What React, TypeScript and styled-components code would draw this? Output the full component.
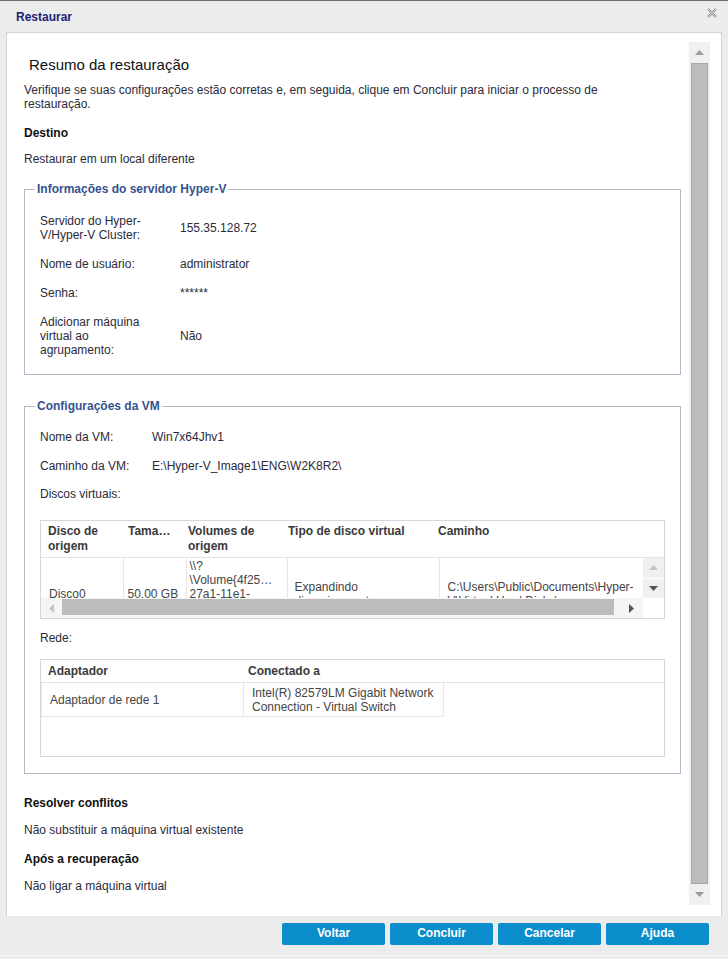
import React from 'react';
import styled, { createGlobalStyle } from 'styled-components';

const GlobalStyle = createGlobalStyle`
  html, body {
    margin: 0;
    padding: 0;
    background: #ececec;
  }
  body {
    font-family: "Liberation Sans", Arial, sans-serif;
    font-size: 12px;
    color: #2a2a3a;
  }
`;

const Dialog = styled.div`
  width: 728px;
  height: 959px;
  box-sizing: border-box;
  background: #ececec;
  border-top: 1px solid #6e6e6e;
  display: flex;
  flex-direction: column;
  overflow: hidden;
`;

const TitleBar = styled.div`
  flex: none;
  height: 31px;
  display: flex;
  align-items: center;
  padding: 0 10px 0 16px;
`;

const Title = styled.span`
  font-weight: bold;
  font-size: 12px;
  color: #1c2372;
`;

const CloseButton = styled.button`
  margin-left: auto;
  align-self: flex-start;
  margin-top: 6px;
  width: 12px;
  height: 12px;
  padding: 0;
  border: 0;
  background: none;
  display: flex;
`;

const Panel = styled.div`
  flex: 1;
  min-height: 0;
  margin: 0 6px;
  background: #fff;
  border: 1px solid #d2d2d2;
  border-bottom: 0;
  display: flex;
`;

const Content = styled.div`
  flex: 1;
  min-width: 0;
  padding: 23px 8px 0 17px;
  overflow: hidden;
`;

const ScrollTrack = styled.div`
  flex: none;
  width: 21px;
  margin: 9px 11px 11px 0;
  background: #f0f0f0;
  display: flex;
  flex-direction: column;
`;

const ArrowBox = styled.div`
  flex: none;
  height: 21px;
  display: flex;
  align-items: center;
  justify-content: center;
`;

const Thumb = styled.div`
  flex: 1;
  margin: 0 2px;
  background: #bcbcbc;
  border: 1px solid #a8a8a8;
`;

const Heading = styled.h1`
  margin: 0;
  padding-left: 5px;
  font-size: 15px;
  font-weight: normal;
  line-height: 18px;
  color: #111;
`;

const Text = styled.p<{ $top: number; $max?: number }>`
  margin: ${(p) => p.$top}px 0 0;
  max-width: ${(p) => (p.$max ? `${p.$max}px` : 'none')};
  line-height: 14px;
`;

const SectionTitle = styled.h3<{ $top: number }>`
  margin: ${(p) => p.$top}px 0 0;
  font-size: 12px;
  font-weight: bold;
  line-height: 14px;
  color: #111;
`;

const Group = styled.fieldset<{ $top: number; $bottom: number }>`
  margin: ${(p) => p.$top}px 0 0;
  padding: 0 15px ${(p) => p.$bottom}px;
  border: 1px solid #b6b6c6;
  min-width: 0;
`;

const GroupTitle = styled.legend`
  margin-left: -5px;
  padding: 0 2px;
  font-weight: bold;
  line-height: 14px;
  color: #35528e;
`;

const InfoGrid = styled.div<{ $label: number; $top: number }>`
  display: grid;
  grid-template-columns: ${(p) => p.$label}px 1fr;
  row-gap: 15px;
  align-items: center;
  margin-top: ${(p) => p.$top}px;
  line-height: 14px;
`;

const GridBox = styled.div<{ $top: number; $height: number }>`
  margin-top: ${(p) => p.$top}px;
  height: ${(p) => p.$height}px;
  box-sizing: border-box;
  border: 1px solid #d6d6dc;
  display: flex;
  flex-direction: column;
  color: #444;
`;

const HeaderRow = styled.div<{ $height: number; $padTop: number }>`
  flex: none;
  height: ${(p) => p.$height}px;
  box-sizing: border-box;
  padding-top: ${(p) => p.$padTop}px;
  border-bottom: 1px solid #e2e2e2;
  display: flex;
  align-items: flex-start;
  font-weight: bold;
  color: #3a3a3a;
  line-height: 15px;
`;

const HeaderCell = styled.div<{ $w?: number }>`
  flex: ${(p) => (p.$w ? `0 0 ${p.$w}px` : '1')};
  padding-left: 7px;
  box-sizing: border-box;
  white-space: nowrap;
`;

const BodyArea = styled.div`
  flex: 1;
  min-height: 0;
  display: flex;
`;

const Viewport = styled.div`
  flex: 1;
  min-width: 0;
  overflow: hidden;
`;

const DataTable = styled.table`
  border-collapse: collapse;
  table-layout: fixed;
  line-height: 14px;
`;

const Cell = styled.td<{ $w: number; $pad?: number }>`
  width: ${(p) => p.$w}px;
  min-width: ${(p) => p.$w}px;
  max-width: ${(p) => p.$w}px;
  padding: 1px ${(p) => p.$pad ?? 7}px;
  box-sizing: border-box;
  border-right: 1px solid #e6e6e6;
  vertical-align: middle;
  white-space: nowrap;
  overflow: hidden;
`;

const VScroll = styled.div`
  flex: none;
  width: 21px;
  display: flex;
  flex-direction: column;
  gap: 1px;
  background: #fff;
`;

const VScrollButton = styled.div`
  flex: 1;
  background: #f0f0f0;
  display: flex;
  align-items: center;
  justify-content: center;
`;

const HScroll = styled.div`
  flex: none;
  height: 20px;
  display: flex;
`;

const HTrack = styled.div`
  flex: 1;
  display: flex;
  background: #f5f5f5;
`;

const HLeft = styled.div`
  flex: 0 0 21px;
  display: flex;
  align-items: center;
  justify-content: center;
`;

const HThumb = styled.div`
  flex: 0 0 552px;
  height: 16px;
  margin-top: 1px;
  background: #bcbcbc;
`;

const HRight = styled.div`
  flex: 1;
  display: flex;
  align-items: center;
  justify-content: flex-end;
  padding-right: 9px;
`;

const Corner = styled.div`
  flex: 0 0 21px;
  background: #fff;
`;

const NetTable = styled.table`
  align-self: flex-start;
  border-collapse: collapse;
  table-layout: fixed;
  line-height: 14px;
`;

const NetCell = styled.td<{ $w: number }>`
  width: ${(p) => p.$w}px;
  box-sizing: border-box;
  padding: 3px 7px 2px 8px;
  border: 1px solid #e6e6e6;
  border-top: 0;
  vertical-align: middle;
  white-space: nowrap;
`;

const Footer = styled.div`
  flex: none;
  height: 40px;
  box-sizing: border-box;
  padding: 7px 19px 0 0;
  display: flex;
  justify-content: flex-end;
  align-items: flex-start;
  gap: 5px;
  border-bottom: 1px solid #f8f8f8;
  margin-bottom: 3px;
`;

const Button = styled.button`
  width: 103px;
  height: 22px;
  padding: 0 0 3px;
  border: 0;
  border-radius: 2px;
  background: #0b8dcb;
  color: #fff;
  font-family: "Liberation Sans", Arial, sans-serif;
  font-size: 12px;
  font-weight: bold;
  cursor: pointer;
`;

const Arrow = ({ dir, color }: { dir: 'up' | 'down' | 'left' | 'right'; color: string }) => {
  const points = {
    up: '0,5 4.5,0 9,5',
    down: '0,0 4.5,5 9,0',
    left: '5,0 0,4.5 5,9',
    right: '0,0 5,4.5 0,9',
  }[dir];
  const vertical = dir === 'up' || dir === 'down';
  return (
    <svg width={vertical ? 9 : 5} height={vertical ? 5 : 9} viewBox={vertical ? '0 0 9 5' : '0 0 5 9'}>
      <polygon points={points} fill={color} />
    </svg>
  );
};

const serverRows: [React.ReactNode, string][] = [
  [<>Servidor do Hyper-<br />V/Hyper-V Cluster:</>, '155.35.128.72'],
  ['Nome de usuário:', 'administrator'],
  ['Senha:', '******'],
  [<>Adicionar máquina<br />virtual ao<br />agrupamento:</>, 'Não'],
];

const diskColumns = [
  { title: <>Disco de<br />origem</>, w: 80 },
  { title: 'Tama…', w: 60 },
  { title: <>Volumes de<br />origem</>, w: 100 },
  { title: 'Tipo de disco virtual', w: 150 },
  { title: 'Caminho' },
];

const App = () => {
  return (
    <>
      <GlobalStyle />
      <Dialog>
        <TitleBar>
          <Title>Restaurar</Title>
          <CloseButton aria-label="Fechar">
            <svg width="12" height="12" viewBox="0 0 12 12">
              <path d="M2 2 L10 10 M10 2 L2 10" stroke="#8a8a8a" strokeWidth="2.2" />
              <path d="M2 2 L10 10 M10 2 L2 10" stroke="#ececec" strokeWidth="0.8" />
            </svg>
          </CloseButton>
        </TitleBar>

        <Panel>
          <Content>
            <Heading>Resumo da restauração</Heading>
            <Text $top={9} $max={600}>
              Verifique se suas configurações estão corretas e, em seguida, clique em Concluir para iniciar o processo de
              restauração.
            </Text>

            <SectionTitle $top={15}>Destino</SectionTitle>
            <Text $top={12}>Restaurar em um local diferente</Text>

            <Group $top={16} $bottom={17}>
              <GroupTitle>Informações do servidor Hyper-V</GroupTitle>
              <InfoGrid $label={140} $top={18}>
                {serverRows.map(([label, value], i) => (
                  <React.Fragment key={i}>
                    <span>{label}</span>
                    <span>{value}</span>
                  </React.Fragment>
                ))}
              </InfoGrid>
            </Group>

            <Group $top={24} $bottom={16}>
              <GroupTitle>Configurações da VM</GroupTitle>
              <InfoGrid $label={112} $top={17}>
                <span>Nome da VM:</span>
                <span>Win7x64Jhv1</span>
                <span>Caminho da VM:</span>
                <span>E:\Hyper-V_Image1\ENG\W2K8R2\</span>
              </InfoGrid>
              <Text $top={14}>Discos virtuais:</Text>

              <GridBox $top={19} $height={99}>
                <HeaderRow $height={37} $padTop={3}>
                  {diskColumns.map((c, i) => (
                    <HeaderCell key={i} $w={c.w}>
                      {c.title}
                    </HeaderCell>
                  ))}
                </HeaderRow>
                <BodyArea>
                  <Viewport>
                    <DataTable>
                      <tbody>
                        <tr>
                          <Cell $w={82} $pad={8}>Disco0</Cell>
                          <Cell $w={63} $pad={4}>50.00 GB</Cell>
                          <Cell $w={101} $pad={3}>
                            \\?<br />\Volume{'{'}4f25…<br />27a1-11e1-<br />a0c4-<br />806e6f6e6963{'}'}\
                          </Cell>
                          <Cell $w={152} $pad={7}>
                            Expandindo<br />dinamicamente
                          </Cell>
                          <Cell $w={230} $pad={8}>
                            C:\Users\Public\Documents\Hyper-<br />V\Virtual Hard Disks\
                          </Cell>
                        </tr>
                      </tbody>
                    </DataTable>
                  </Viewport>
                  <VScroll>
                    <VScrollButton>
                      <Arrow dir="up" color="#c4c4c4" />
                    </VScrollButton>
                    <VScrollButton>
                      <Arrow dir="down" color="#555" />
                    </VScrollButton>
                  </VScroll>
                </BodyArea>
                <HScroll>
                  <HTrack>
                    <HLeft>
                      <Arrow dir="left" color="#c4c4c4" />
                    </HLeft>
                    <HThumb />
                    <HRight>
                      <Arrow dir="right" color="#555" />
                    </HRight>
                  </HTrack>
                  <Corner />
                </HScroll>
              </GridBox>

              <Text $top={12}>Rede:</Text>

              <GridBox $top={14} $height={98}>
                <HeaderRow $height={23} $padTop={4}>
                  <HeaderCell $w={200}>Adaptador</HeaderCell>
                  <HeaderCell>Conectado a</HeaderCell>
                </HeaderRow>
                <NetTable>
                  <tbody>
                    <tr>
                      <NetCell $w={202}>Adaptador de rede 1</NetCell>
                      <NetCell $w={200}>
                        Intel(R) 82579LM Gigabit Network<br />Connection - Virtual Switch
                      </NetCell>
                    </tr>
                  </tbody>
                </NetTable>
              </GridBox>
            </Group>

            <SectionTitle $top={22}>Resolver conflitos</SectionTitle>
            <Text $top={13}>Não substituir a máquina virtual existente</Text>
            <SectionTitle $top={15}>Após a recuperação</SectionTitle>
            <Text $top={13}>Não ligar a máquina virtual</Text>
          </Content>

          <ScrollTrack>
            <ArrowBox>
              <Arrow dir="up" color="#9a9a9a" />
            </ArrowBox>
            <Thumb />
            <ArrowBox>
              <Arrow dir="down" color="#9a9a9a" />
            </ArrowBox>
          </ScrollTrack>
        </Panel>

        <Footer>
          <Button>Voltar</Button>
          <Button>Concluir</Button>
          <Button>Cancelar</Button>
          <Button>Ajuda</Button>
        </Footer>
      </Dialog>
    </>
  );
};

export default App;
